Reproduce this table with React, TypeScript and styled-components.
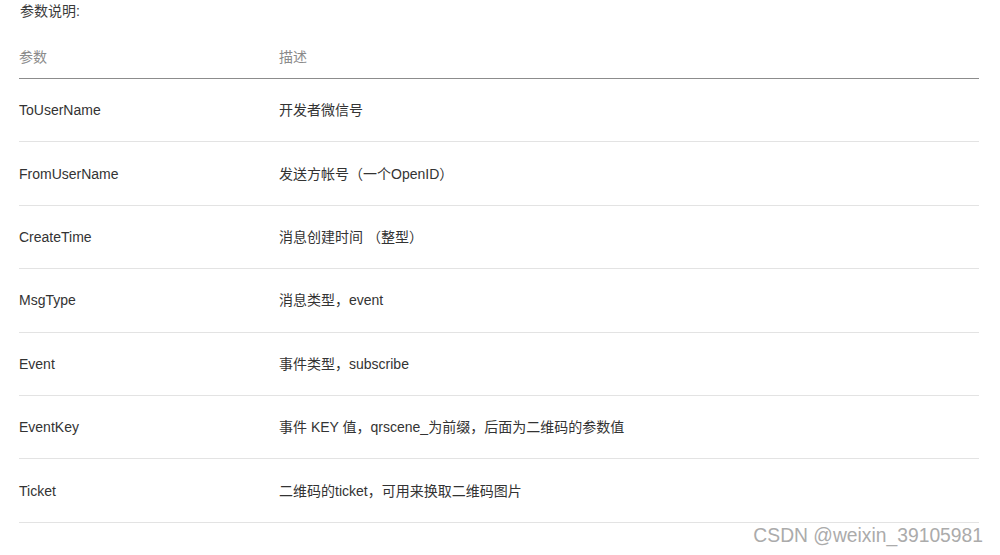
import React from "react";
import styled, { createGlobalStyle } from "styled-components";

const Global = createGlobalStyle`
  html, body { margin: 0; padding: 0; background: #fff; }
  body {
    font-family: "Liberation Sans", Arial, "Noto Sans CJK SC", sans-serif;
    font-size: 14px;
    color: #333;
  }
`;

const Page = styled.div`
  position: relative;
  width: 1000px;
  height: 555px;
  overflow: hidden;
  background: #fff;
`;

const Title = styled.div`
  padding: 3px 0 0 20px;
  height: 17px;
  line-height: 17px;
  color: #3a3a3a;
`;

const Table = styled.div`
  margin: 17px 0 0 19px;
  width: 960px;
`;

const HeaderRow = styled.div`
  display: grid;
  grid-template-columns: 260px 1fr;
  align-items: center;
  height: 42px;
  padding-bottom: 2px;
  box-sizing: border-box;
  border-bottom: 1px solid #8c8c8c;
  color: #8a8a8a;
`;

const Row = styled.div`
  display: grid;
  grid-template-columns: 260px 1fr;
  align-items: center;
  height: 63.4px;
  box-sizing: border-box;
  border-bottom: 1px solid #e3e3e3;
  color: #333;
`;

const Cell = styled.div`
  line-height: 20px;
  white-space: pre;
`;

const Watermark = styled.div`
  position: absolute;
  right: 17px;
  top: 524px;
  font-size: 19.3px;
  line-height: 24px;
  color: #ababab;
`;

const rows: [string, string][] = [
  ["ToUserName", "开发者微信号"],
  ["FromUserName", "发送方帐号（一个OpenID）"],
  ["CreateTime", "消息创建时间 （整型）"],
  ["MsgType", "消息类型，event"],
  ["Event", "事件类型，subscribe"],
  ["EventKey", "事件 KEY 值，qrscene_为前缀，后面为二维码的参数值"],
  ["Ticket", "二维码的ticket，可用来换取二维码图片"],
];

export default function App() {
  return (
    <Page>
      <Global />
      <Title>参数说明:</Title>
      <Table>
        <HeaderRow>
          <Cell>参数</Cell>
          <Cell>描述</Cell>
        </HeaderRow>
        {rows.map(([k, v]) => (
          <Row key={k}>
            <Cell>{k}</Cell>
            <Cell>{v}</Cell>
          </Row>
        ))}
      </Table>
      <Watermark>CSDN @weixin_39105981</Watermark>
    </Page>
  );
}
